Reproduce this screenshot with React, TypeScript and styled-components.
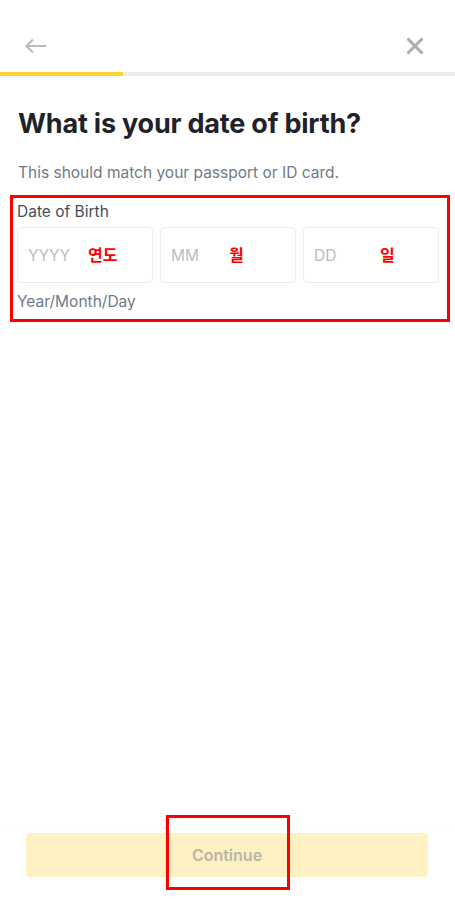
import React from "react";
import styled, { createGlobalStyle } from "styled-components";

const Global = createGlobalStyle`
  html, body { margin: 0; padding: 0; background: #ffffff; }
  body { font-family: "Inter", "Noto Sans", "Noto Sans CJK KR", sans-serif; }
  * { box-sizing: border-box; }
`;

const Page = styled.div`
  width: 455px;
  height: 923px;
  display: flex;
  flex-direction: column;
  background: #fff;
  position: relative;
  overflow: hidden;
`;

const Header = styled.div`
  height: 72px;
  padding: 28px 22px 0 18px;
  display: flex;
  align-items: flex-start;
  justify-content: space-between;
`;

const IconButton = styled.div`
  width: 36px;
  height: 36px;
  display: flex;
  align-items: center;
  justify-content: center;
`;

const Progress = styled.div`
  height: 4px;
  background: #eaecef;
  display: flex;
`;

const ProgressFill = styled.div`
  height: 100%;
  background: #fcd535;
`;

const Content = styled.div`
  flex: 1;
  padding: 30px 17px 0 17px;
  display: flex;
  flex-direction: column;
`;

const Title = styled.h1`
  margin: 0 0 0 1px;
  font-size: 27px;
  line-height: 36px;
  font-weight: 700;
  color: #1e2329;
  letter-spacing: -0.2px;
`;

const Subtitle = styled.p`
  margin: 20px 0 0 1px;
  font-size: 15.5px;
  line-height: 22px;
  color: #707a8a;
`;

const FieldGroup = styled.div`
  position: relative;
  margin-top: 17px;
  display: flex;
  flex-direction: column;
`;

const Label = styled.div`
  font-size: 15.5px;
  line-height: 22px;
  color: #474d57;
`;

const Inputs = styled.div`
  margin-top: 4px;
  display: grid;
  grid-template-columns: 136px 136px 136px;
  column-gap: 7px;
`;

const InputBox = styled.div`
  height: 56px;
  border: 1px solid #eaecef;
  border-radius: 4px;
  display: flex;
  align-items: center;
  padding-left: 10px;
  position: relative;
`;

const Placeholder = styled.span`
  font-size: 15.5px;
  color: #b7bdc6;
`;

const Note = styled.span<{ $left: number }>`
  position: absolute;
  left: ${(p) => p.$left}px;
  top: 50%;
  transform: translateY(-55%);
  font-family: "Noto Sans CJK KR", sans-serif;
  font-weight: 700;
  font-size: 16px;
  color: #ff0000;
`;

const Hint = styled.div`
  margin-top: 8px;
  font-size: 15.5px;
  line-height: 22px;
  color: #707a8a;
`;

const RedFrame = styled.div`
  position: absolute;
  border: 3px solid #ff0000;
  pointer-events: none;
`;

const Footer = styled.div`
  padding: 0 27px 46px 26px;
  border-top: 1px solid #fbfbfb;
  padding-top: 7px;
`;

const Button = styled.button`
  width: 100%;
  height: 44px;
  border: none;
  border-radius: 4px;
  background: #fdf0c2;
  color: #b9b6a8;
  font-family: "Inter", "Noto Sans", sans-serif;
  font-size: 16px;
  font-weight: 600;
  display: flex;
  align-items: center;
  justify-content: center;
  padding: 0;
`;

export default function App() {
  return (
    <>
      <Global />
      <Page>
        <Header>
          <IconButton>
            <svg width="24" height="24" viewBox="0 0 24 24" fill="none">
              <path d="M22.5 12H2.5M9 5.5L2.5 12L9 18.5" stroke="#b7bdc6" strokeWidth="2.2" />
            </svg>
          </IconButton>
          <IconButton>
            <svg width="20" height="20" viewBox="0 0 20 20" fill="none">
              <path d="M2.5 2.5l15 15M17.5 2.5l-15 15" stroke="#a8adb6" strokeWidth="3" />
            </svg>
          </IconButton>
        </Header>
        <Progress>
          <ProgressFill style={{ width: "123px" }} />
        </Progress>
        <Content>
          <Title>What is your date of birth?</Title>
          <Subtitle>This should match your passport or ID card.</Subtitle>
          <FieldGroup>
            <Label>Date of Birth</Label>
            <Inputs>
              <InputBox>
                <Placeholder>YYYY</Placeholder>
                <Note $left={70}>연도</Note>
              </InputBox>
              <InputBox>
                <Placeholder>MM</Placeholder>
                <Note $left={68}>월</Note>
              </InputBox>
              <InputBox>
                <Placeholder>DD</Placeholder>
                <Note $left={76}>일</Note>
              </InputBox>
            </Inputs>
            <Hint>Year/Month/Day</Hint>
            <RedFrame style={{ left: -7, right: -12, top: -6, bottom: -9 }} />
          </FieldGroup>
        </Content>
        <Footer>
          <Button>Continue</Button>
        </Footer>
        <RedFrame style={{ left: 166, top: 815, width: 124, height: 75 }} />
      </Page>
    </>
  );
}
